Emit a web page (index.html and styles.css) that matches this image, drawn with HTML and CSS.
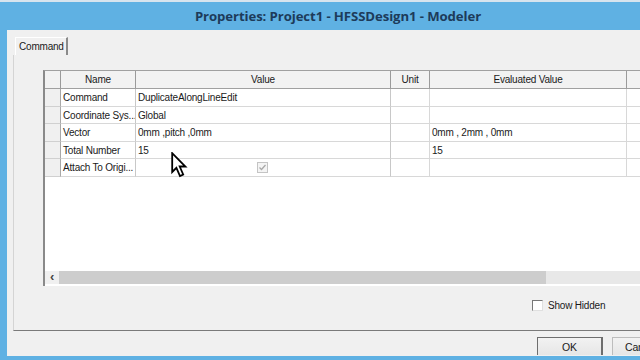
FILE: index.html
```html
<!DOCTYPE html>
<html>
<head>
<meta charset="utf-8">
<link rel="stylesheet" href="styles.css">
</head>
<body>
<div class="window">
  <div class="titlebar"><span class="title">Properties: Project1 - HFSSDesign1 - Modeler</span></div>
  <div class="client">
    <div class="tabs"><div class="tab">Command</div></div>
    <div class="panel">
      <div class="grid">
        <div class="row head">
          <div class="c rh"></div>
          <div class="c name">Name</div>
          <div class="c value">Value</div>
          <div class="c unit">Unit</div>
          <div class="c eval">Evaluated Value</div>
          <div class="c extra"></div>
        </div>
        <div class="row">
          <div class="c rh"></div>
          <div class="c name">Command</div>
          <div class="c value">DuplicateAlongLineEdit</div>
          <div class="c unit"></div>
          <div class="c eval"></div>
          <div class="c extra"></div>
        </div>
        <div class="row">
          <div class="c rh"></div>
          <div class="c name">Coordinate Sys...</div>
          <div class="c value">Global</div>
          <div class="c unit"></div>
          <div class="c eval"></div>
          <div class="c extra"></div>
        </div>
        <div class="row">
          <div class="c rh"></div>
          <div class="c name">Vector</div>
          <div class="c value">0mm ,pitch ,0mm</div>
          <div class="c unit"></div>
          <div class="c eval">0mm , 2mm , 0mm</div>
          <div class="c extra"></div>
        </div>
        <div class="row">
          <div class="c rh"></div>
          <div class="c name">Total Number</div>
          <div class="c value">15</div>
          <div class="c unit"></div>
          <div class="c eval">15</div>
          <div class="c extra"></div>
        </div>
        <div class="row">
          <div class="c rh"></div>
          <div class="c name">Attach To Origi...</div>
          <div class="c value chk-cell"><span class="chk"><svg width="9" height="9" viewBox="0 0 9 9"><path d="M1.5 4.5 L3.5 6.5 L7.5 2" fill="none" stroke="#a8a8a8" stroke-width="1.3"/></svg></span></div>
          <div class="c unit"></div>
          <div class="c eval"></div>
          <div class="c extra"></div>
        </div>
        <div class="empty"></div>
        <div class="hscroll">
          <div class="arrow">&lsaquo;</div>
          <div class="thumb"></div>
          <div class="track"></div>
          <div class="arrow r">&rsaquo;</div>
        </div>
      </div>
      <div class="options">
        <label class="show"><span class="box"></span>Show Hidden</label>
      </div>
    </div>
    <div class="buttons">
      <div class="btn ok">OK</div>
      <div class="btn cancel">Cancel</div>
    </div>
  </div>
  <div class="bottom"></div>
</div>
<svg class="cursor" width="17" height="27" viewBox="0 0 17 27"><path d="M1.2 1.2 L1.2 20 L5.4 15.8 L9 24 L12.2 22.5 L8.7 14.5 L14.4 14.5 Z" fill="#fff" stroke="#000" stroke-width="1.8" stroke-linejoin="miter"/></svg>
</body>
</html>
```
FILE: styles.css
```css
html, body { margin: 0; padding: 0; }
body {
  width: 640px; height: 360px; overflow: hidden;
  background: #5fb1e3;
  font-family: "Liberation Sans", Arial, sans-serif;
  font-size: 10px;
  letter-spacing: -0.2px;
  color: #1a1a1a;
  position: relative;
}
.window { display: flex; flex-direction: column; height: 360px; }
.titlebar {
  height: 28px;
  border-top: 2px solid #d7e4ee;
  background: #5fb1e3;
  display: flex; align-items: center; justify-content: center;
  padding-left: 36px;
}
.title {
  font-family: "Open Sans", sans-serif;
  font-weight: 700; font-size: 13.2px;
  color: #1d3b5a;
  letter-spacing: -0.1px;
}
.client {
  margin-left: 7px;
  height: 326px;
  background: #f0f0f0;
  display: flex; flex-direction: column;
  overflow: hidden;
}
.bottom { height: 4px; background: #5fb1e3; }
.tabs { height: 18px; margin-top: 7px; padding-left: 8px; display: flex; }
.tab {
  width: 53px; height: 18px; box-sizing: border-box;
  border-left: 1px solid #ffffff; border-top: 1px solid #ffffff;
  border-right: 2px solid #8a8a8a;
  padding-left: 3px; line-height: 17px;
  white-space: nowrap;
}
.panel {
  margin-left: 6px;
  height: 276px;
  border-left: 1px solid #d4d4d4;
  border-bottom: 1px solid #7a7a7a;
  display: flex; flex-direction: column;
  padding-top: 15px; padding-left: 29px;
  box-sizing: border-box;
}
.grid {
  width: 640px;
  border-left: 2px solid #8a8a8a;
  border-top: 1px solid #a0a0a0;
  background: #fff;
  display: flex; flex-direction: column;
  height: 215px;
}
.row { display: flex; height: 17.6px; }
.c {
  flex-shrink: 0;
  box-sizing: border-box;
  border-right: 1px solid #d8d8d8;
  border-bottom: 1px solid #d8d8d8;
  padding-left: 2px;
  line-height: 17px;
  white-space: nowrap; overflow: hidden;
}
.rh { width: 16px; background: #f0f0f0; border-right: 1px solid #a8a8a8; border-bottom: 1px solid #d0d0d0; }
.name { width: 75px; border-right: 1px solid #c8c8c8; }
.value { width: 255px; border-right: 1px solid #c8c8c8; }
.unit { width: 39px; }
.eval { width: 197px; }
.extra { width: 40px; }
.head { height: 18px; }
.head .c {
  background: #f2f2f2;
  text-align: center; padding-left: 0;
  border-right: 1px solid #9a9a9a;
  border-bottom: 1px solid #a0a0a0;
}
.head .rh { border-right: 1px solid #9a9a9a; }
.chk-cell { display: flex; align-items: center; padding-left: 121px; }
.chk {
  width: 9px; height: 9px;
  border: 1px solid #c4c4c4; background: #f4f4f4;
  display: flex;
}
.empty { flex: 1; }
.hscroll { height: 13px; display: flex; align-items: stretch; background: #f0f0f0; margin-bottom: 2px; }
.arrow { width: 14px; flex-shrink: 0; font-size: 13px; line-height: 12px; text-align: center; color: #444; font-weight: 700; }
.thumb { width: 487px; flex-shrink: 0; background: #cdcdcd; }
.track { flex: 1; background: #e8e8e8; }
.arrow.r { width: 30px; text-align: left; padding-left: 0; box-sizing: border-box; background: #f0f0f0; }
.options { display: flex; justify-content: flex-end; padding-top: 14px; }
.show { display: flex; align-items: center; width: 108px; font-size: 10px; }
.box {
  width: 9px; height: 9px; background: #fff;
  border-left: 1px solid #777; border-top: 1px solid #777;
  border-right: 1px solid #e0e0e0; border-bottom: 1px solid #e0e0e0;
  margin-right: 5px;
}
.buttons { display: flex; padding-top: 6px; padding-left: 530px; gap: 9px; }
.btn {
  flex-shrink: 0;
  height: 18px; box-sizing: border-box;
  border: 1px solid #6e6e6e;
  border-bottom: none;
  background: linear-gradient(#f2f2f2, #e6e6e6);
  text-align: center; line-height: 19px; font-size: 10.5px;
  white-space: nowrap;
}
.ok { width: 66px; border-right: 2px solid #6e6e6e; }
.cancel { width: 66px; border-color: #bdbdbd; text-align: left; padding-left: 12px; }
.cursor { position: absolute; left: 171px; top: 152px; }
```
